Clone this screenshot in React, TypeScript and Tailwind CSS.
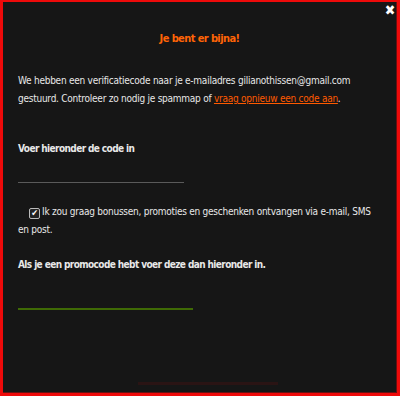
import React from 'react';

const App: React.FC = () => {
  return (
    <div
      className="w-[400px] h-[396px] bg-[#ee0a0a] pl-[3px] pt-[2px] pr-[3px] pb-[3px]"
      style={{ fontFamily: '"DejaVu Sans Condensed", "DejaVu Sans", sans-serif' }}
    >
      <div className="relative h-full bg-[#161616] border-r border-b border-[#6a1010] text-[#e8e8e8] text-[10px] tracking-[-0.25px] leading-[18px] px-[15px]">
        {/* close */}
        <div className="absolute right-[1px] top-[1px] text-white text-[14px] font-bold leading-none">✖</div>

        <h1 className="pt-[28px] text-center text-[#ff6406] font-bold text-[11px] tracking-[-0.6px] leading-[18px]">
          Je bent er bijna!
        </h1>

        <p className="mt-[24px]">
          We hebben een verificatiecode naar je e-mailadres gilianothissen@gmail.com gestuurd. Controleer zo nodig je spammap of{' '}
          <a className="text-[#ff5a00] underline">vraag opnieuw een code aan</a>.
        </p>

        <p className="mt-[32px] font-bold text-[10px] tracking-[-0.6px]">Voer hieronder de code in</p>
        <div className="mt-[24px] w-[166px] h-px bg-[#5a5a5a]" />

        <p className="mt-[20px] pl-[11px] whitespace-nowrap">
          <span className="inline-flex items-center justify-center w-[11px] h-[11px] mr-[2px] align-[-1px] rounded-[2px] border border-[#bbb] bg-[#222] text-white text-[9px] leading-none">
            ✔
          </span>
          Ik zou graag bonussen, promoties en geschenken ontvangen via e-mail, SMS
        </p>
        <p>en post.</p>

        <p className="mt-[17px] font-bold text-[10px] tracking-[-0.6px]">
          Als je een promocode hebt voer deze dan hieronder in.
        </p>
        <div className="mt-[34px] w-[175px] h-[2px] bg-[#3f6a05]" />

        <div className="absolute left-[135px] bottom-[7px] w-[140px] h-[3px] bg-[#2a1414]" />
      </div>
    </div>
  );
};

export default App;
